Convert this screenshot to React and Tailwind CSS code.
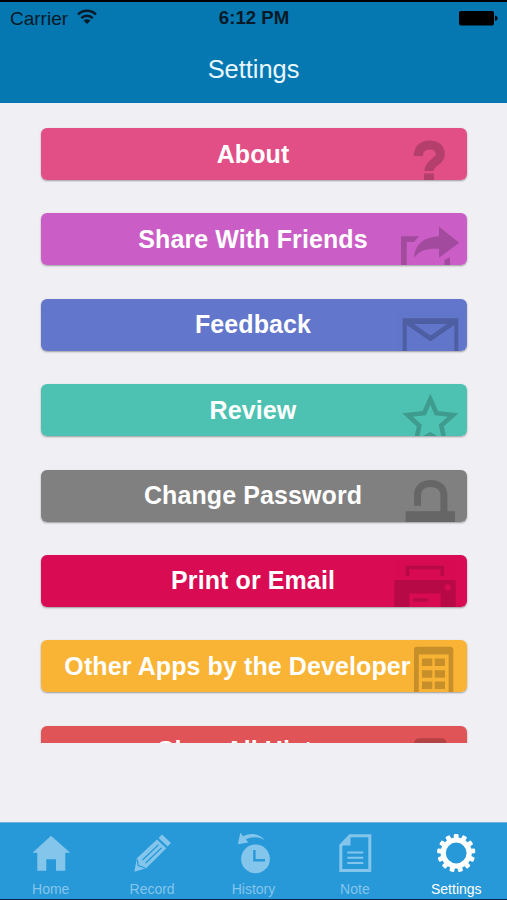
import clsx from 'clsx';

// ── Row icons, clipped by the bottom edge of each button ────────────────────
const icons = {
	question: (
		<>
			<path d="M23.2 28C23.5 20.5 28 17 34.5 17C41.3 17 45.3 20.5 45.3 26.5C45.3 34 34 34 34 43" fill="none" stroke="currentColor" strokeWidth="9" />
			<rect x="29" y="45.5" width="10" height="7" />
		</>
	),
	share: (
		<>
			<path d="M6 23.2H24L19 29H11.7V52H6Z" />
			<path d="M44 13.8L64.3 29.8L44 44.8V36C32 35 24 38 19 45C20 31 28 24 44 23.2Z" />
			<path d="M49.5 47L55 44V52H49.5Z" />
		</>
	),
	mail: (
		<>
			<path d="M7.7 19.3H63.3V60H59.3V25H11.7V60H7.7Z" />
			<path d="M11.7 23L35.5 39.5L59.3 23" fill="none" stroke="currentColor" strokeWidth="5" />
		</>
	),
	star: (
		<path
			d="M35.3 15.2L41.4 29.2L58 31L46.3 41.5L50 59L35.3 50.6L20.6 59L24.3 41.5L12.6 31L29.2 29.2Z"
			fill="none"
			stroke="currentColor"
			strokeWidth="4.6"
			strokeMiterlimit="10"
		/>
	),
	lock: (
		<>
			<path d="M22.5 35.7V25.5C22.5 17.5 28 13.5 35.7 13.5C43.4 13.5 48.9 17.5 48.9 25.5V42" fill="none" stroke="currentColor" strokeWidth="7" />
			<rect x="10.7" y="41.2" width="49.3" height="12" />
		</>
	),
	printer: (
		<>
			<path d="M12.5 21V12.5H47.3V21" fill="none" stroke="currentColor" strokeWidth="3.6" />
			<path
				fillRule="evenodd"
				d="M-.7 26.5Q-.7 25 1 25H58.7Q60.7 25 60.7 27V53H45.7V38.5H14.3V53H-.7ZM52.7 29.2A3.1 3.1 0 1 0 52.7 35.4A3.1 3.1 0 1 0 52.7 29.2Z"
			/>
			<rect x="18.3" y="43.3" width="15" height="3.2" />
		</>
	),
	building: (
		<>
			<path d="M19 53V9.5Q19 6.8 22 6.8H55.3Q58.3 6.8 58.3 9.5V53H53.6V14.5H23.8V53Z" />
			{[18.5, 30.2, 41.5].map((y) => (
				<g key={y}>
					<rect x="27" y={y} width="10.3" height="7.5" />
					<rect x="39.7" y={y} width="10.3" height="7.5" />
				</g>
			))}
		</>
	),
	bin: <rect x="19" y="12.2" width="32.7" height="50" rx="5" />,
};

const rows = [
	{ label: 'About', bg: 'bg-[#e14f86]', icon: 'question' },
	{ label: 'Share With Friends', bg: 'bg-[#cb5ec6]', icon: 'share' },
	{ label: 'Feedback', bg: 'bg-[#6276cb]', icon: 'mail' },
	{ label: 'Review', bg: 'bg-[#4ec2b2]', icon: 'star' },
	{ label: 'Change Password', bg: 'bg-[#808080]', icon: 'lock' },
	{ label: 'Print or Email', bg: 'bg-[#d80b53]', icon: 'printer' },
	{ label: 'Other Apps by the Developer', bg: 'bg-[#f9b335]', icon: 'building', pad: 'pt-[10px] pr-[33px]' },
	{ label: 'Clear All History', bg: 'bg-[#e05356]', icon: 'bin', pad: 'pt-[8px]' },
];

const teeth = Array.from({ length: 13 }, (_, i) => (i * 360) / 13);

// ── Tab bar icons ───────────────────────────────────────────────────────────
const tabs = [
	{
		label: 'Home',
		icon: <path d="M22 3.7L41.3 20.7H36.3V38.7H27V27.3H17.3V38.7H8.3V20.7H3.5Z" />,
	},
	{
		label: 'Record',
		icon: (
			<>
				<path d="M32 2.5L41 11L37.6 14.6L28.6 6Z" />
				<path d="M6.8 26.3L27 7.4L36.3 16.3L16.4 36L9.5 38.2L4.3 39.7L5.3 34.5Z" />
				<path d="M12.5 28L28.5 12.8M15.6 31L31.6 15.8M7.2 27.5L8.3 33.5L15 36" fill="none" stroke="#2798d8" strokeWidth="1.3" />
			</>
		),
	},
	{
		label: 'History',
		icon: (
			<>
				<circle cx="24.5" cy="26.9" r="14.4" />
				<path d="M23.4 18V28.2H34" fill="none" stroke="#2798d8" strokeWidth="2.4" />
				<path d="M6.8 12.3L9.3 .8L12.2 4.2C19 1 28 .8 33.8 8.2C28 4.2 21 4.3 14.8 7.4L17.5 10.6Z" />
			</>
		),
	},
	{
		label: 'Note',
		icon: (
			<>
				<path d="M7.8 13.4L17 3.8H36.8V38.5H7.8Z" fill="none" stroke="currentColor" strokeWidth="3" />
				<path d="M7 13.5L17.5 3V13.5Z" />
				<path d="M14.3 20.5H30.3M14.3 25.7H30.3M14.3 30.9H30.3" stroke="currentColor" strokeWidth="2" />
			</>
		),
	},
	{
		label: 'Settings',
		active: true,
		icon: (
			<>
				<circle cx="22.2" cy="21" r="13" fill="none" stroke="currentColor" strokeWidth="5.2" />
				{teeth.map((deg) => (
					<rect key={deg} x="19.8" y="1.9" width="4.8" height="5" rx="1" transform={`rotate(${deg} 22.2 21)`} />
				))}
			</>
		),
	},
];

function Header() {
	return (
		<header className="h-[102.5px] shrink-0 border-t-2 border-black bg-[#0577b1]">
			<div className="grid h-[33px] grid-cols-3 items-center pl-[10px] pr-[9px] text-[19px] leading-none text-[#061a28]">
				<div className="flex items-center gap-[9px]">
					<span>Carrier</span>
					<svg className="mb-[3px] h-4 w-5" viewBox="0 0 20 16" fill="none" stroke="currentColor" strokeWidth="2.4">
						<path d="M1 5.5C6 .5 14 .5 19 5.5" />
						<path d="M4.3 9.2C7.5 6 12.5 6 15.7 9.2" />
						<path d="M10 15L6.5 11.5C8.5 9.8 11.5 9.8 13.5 11.5Z" fill="currentColor" stroke="none" />
					</svg>
				</div>
				<span className="text-center text-[18.6px] font-bold">6:12 PM</span>
				<svg className="mb-px h-4 w-[39px] justify-self-end text-black" viewBox="0 0 39 16" fill="currentColor">
					<rect x="0" y="1" width="35" height="14.5" rx="2" />
					<path d="M36 5.5Q38.6 6 38.6 8.2T36 11Z" />
				</svg>
			</div>
			<h1 className="mt-[18px] text-center text-[25.4px] leading-8 text-[#e9f7ff]">Settings</h1>
		</header>
	);
}

function SettingsRow({ label, bg, icon, pad = 'pt-[9.5px] pr-[2px]' }) {
	return (
		<button
			className={clsx(
				'relative flex h-[52px] w-full shrink-0 justify-center overflow-hidden rounded-[6px] text-[25px] leading-8 font-bold tracking-[0.1px] whitespace-nowrap text-white',
				bg,
				pad,
			)}
		>
			<span>{label}</span>
			<svg
				className={clsx('absolute top-0 right-0 h-[52px] w-[76px] text-black', icon === 'printer' ? 'opacity-15' : 'opacity-20')}
				viewBox="-4 0 76 52"
				fill="currentColor"
			>
				{icons[icon]}
			</svg>
		</button>
	);
}

function TabBar() {
	return (
		<nav className="grid h-[78.5px] shrink-0 grid-cols-5 border-t border-b-[1.5px] border-t-[#6fb4dc] border-b-[#0b2a4a] bg-[#2798d8]">
			{tabs.map(({ label, active, icon }) => (
				<div key={label} className={clsx('flex flex-col items-center pt-[9.5px]', active ? 'text-white' : 'text-[#84c5ec]')}>
					<svg className="size-11" viewBox="0 0 44 44" fill="currentColor">
						{icon}
					</svg>
					<span className="mt-[3px] text-[14px] leading-5">{label}</span>
				</div>
			))}
		</nav>
	);
}

export default function App() {
	return (
		<div className="flex h-[900px] w-[507px] flex-col overflow-hidden bg-[#efeff4] font-['Liberation_Sans',Arial,sans-serif]">
			<Header />
			<main className="flex-1">
				<div className="flex h-[640px] flex-col gap-[33.4px] overflow-hidden pt-[25.5px] pr-[40px] pl-[41px]">
					{rows.map((row) => (
						<div key={row.label} className="shrink-0 rounded-[6px] shadow-[0_1px_2px_rgba(0,0,0,0.35)]">
							<SettingsRow {...row} />
						</div>
					))}
				</div>
			</main>
			<TabBar />
		</div>
	);
}
